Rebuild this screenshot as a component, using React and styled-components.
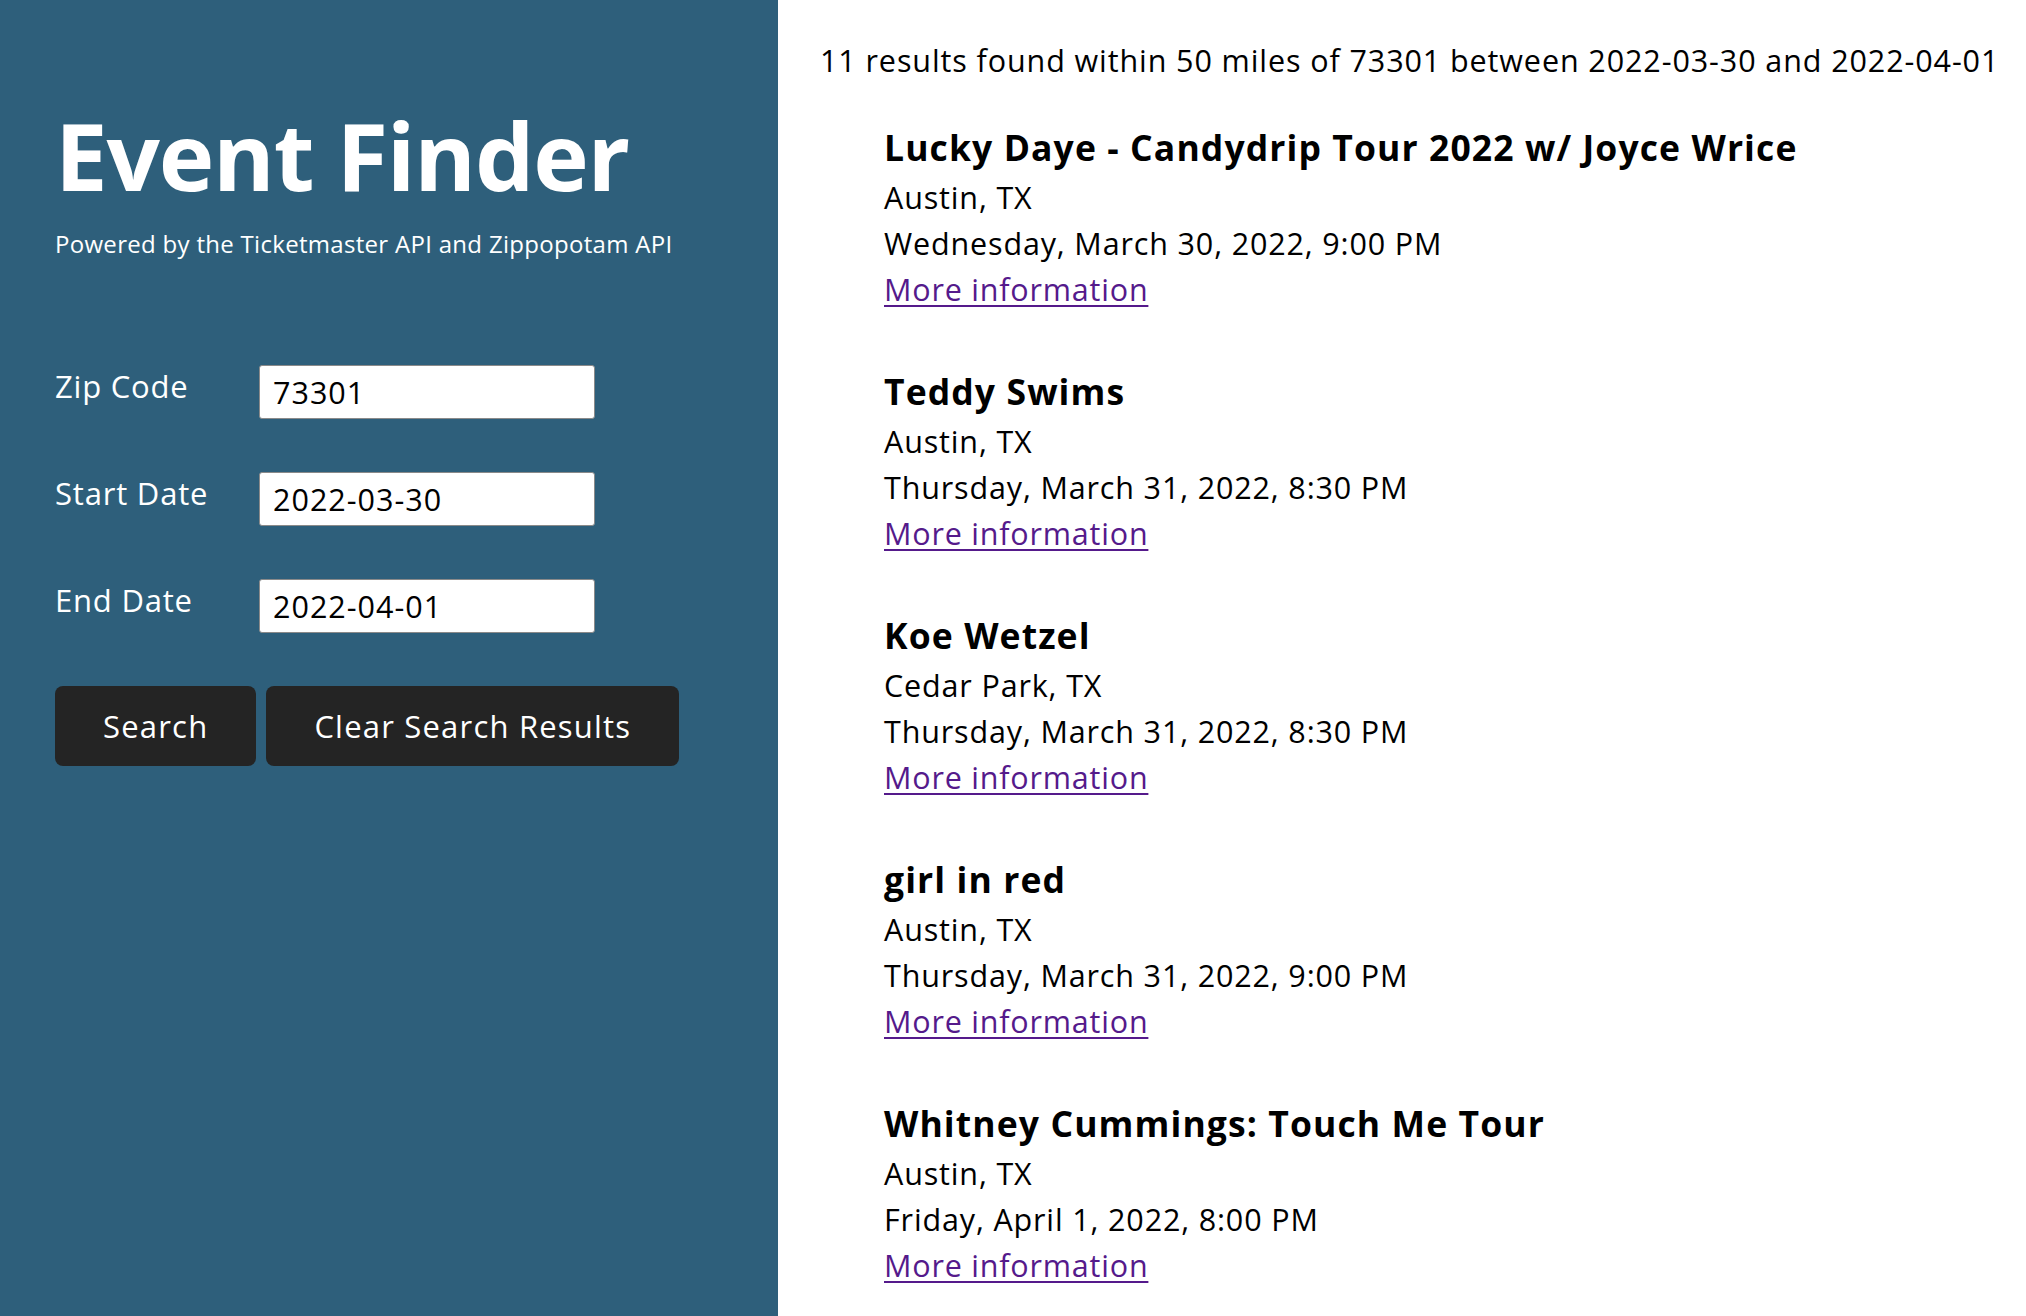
import React from 'react';
import styled, { createGlobalStyle } from 'styled-components';

const GlobalStyle = createGlobalStyle`
  html, body {
    margin: 0;
    padding: 0;
    background: #fff;
  }
  body {
    font-family: "Open Sans", "DejaVu Sans", sans-serif;
    color: #000;
  }
`

const Page = styled.div`
  display: flex;
  min-height: 100vh;
`
const Sidebar = styled.aside`
  flex: 0 0 778px;
  box-sizing: border-box;
  padding: 100px 0 0 55px;
  background: #2e5f7b;
  color: #fff;
`
const Title = styled.h1`
  margin: 0;
  font-size: 94px;
  line-height: 110px;
  font-weight: 700;
  letter-spacing: -1.2px;
`
const Subtitle = styled.p`
  margin: 19px 0 0 0;
  font-size: 24px;
  line-height: 30px;
  font-weight: 500;
  letter-spacing: 0.3px;
`
const Form = styled.form`
  display: flex;
  flex-direction: column;
  gap: 53px;
  margin-top: 106px;
`
const Row = styled.div`
  display: grid;
  grid-template-columns: 204px 336px;
  align-items: start;
`
const Label = styled.label`
  font-size: 31px;
  line-height: 42px;
  letter-spacing: 0.8px;
`
const Input = styled.input`
  box-sizing: border-box;
  width: 336px;
  height: 54px;
  padding: 0 13px;
  border: 1px solid #8a8a8a;
  border-radius: 3px;
  background: #fff;
  font-family: inherit;
  font-size: 30.5px;
  letter-spacing: 1px;
  color: #000;
  outline: none;
`
const Buttons = styled.div`
  display: flex;
  gap: 10px;
`
const Button = styled.button`
  height: 80px;
  padding: 0 48px;
  border: none;
  border-radius: 8px;
  background: #242424;
  color: #fff;
  font-family: inherit;
  font-size: 31px;
  letter-spacing: 1.2px;
  cursor: pointer;
`
const Results = styled.main`
  flex: 1;
  padding: 37px 0 0 42px;
  white-space: nowrap;
`
const Summary = styled.p`
  margin: 0;
  font-size: 30.5px;
  line-height: 46px;
  letter-spacing: 0.9px;
`
const EventList = styled.ul`
  list-style: none;
  margin: 37px 0 0 0;
  padding: 0 0 0 64px;
  display: flex;
  flex-direction: column;
  gap: 52px;
`
const EventItem = styled.li`
  display: flex;
  flex-direction: column;
`
const EventName = styled.h3`
  margin: 0;
  font-size: 35.5px;
  line-height: 54px;
  font-weight: 700;
  letter-spacing: 1.1px;
`
const Line = styled.span`
  font-size: 30.5px;
  line-height: 46px;
  letter-spacing: 0.85px;
`
const MoreLink = styled.a`
  align-self: flex-start;
  font-size: 30.5px;
  line-height: 46px;
  letter-spacing: 0.8px;
  color: #551a8b;
  text-decoration: underline;
  text-decoration-thickness: 2px;
  text-underline-offset: 4px;
`

const fields = [
  { id: 'zip', label: 'Zip Code', value: '73301' },
  { id: 'start', label: 'Start Date', value: '2022-03-30' },
  { id: 'end', label: 'End Date', value: '2022-04-01' },
];

const events = [
  { name: 'Lucky Daye - Candydrip Tour 2022 w/ Joyce Wrice', city: 'Austin, TX', date: 'Wednesday, March 30, 2022, 9:00 PM' },
  { name: 'Teddy Swims', city: 'Austin, TX', date: 'Thursday, March 31, 2022, 8:30 PM' },
  { name: 'Koe Wetzel', city: 'Cedar Park, TX', date: 'Thursday, March 31, 2022, 8:30 PM' },
  { name: 'girl in red', city: 'Austin, TX', date: 'Thursday, March 31, 2022, 9:00 PM' },
  { name: 'Whitney Cummings: Touch Me Tour', city: 'Austin, TX', date: 'Friday, April 1, 2022, 8:00 PM' },
];

const App = () => {
  return (
    <>
      <GlobalStyle />
      <Page>
        <Sidebar>
          <Title>Event Finder</Title>
          <Subtitle>Powered by the Ticketmaster API and Zippopotam API</Subtitle>
          <Form onSubmit={e => e.preventDefault()}>
            { fields.map(f => (
              <Row key={f.id}>
                <Label htmlFor={f.id}>{f.label}</Label>
                <Input id={f.id} defaultValue={f.value} />
              </Row>
            ))}
            <Buttons>
              <Button type="submit">Search</Button>
              <Button type="button">Clear Search Results</Button>
            </Buttons>
          </Form>
        </Sidebar>

        <Results>
          <Summary>11 results found within 50 miles of 73301 between 2022-03-30 and 2022-04-01</Summary>
          <EventList>
            { events.map(ev => (
              <EventItem key={ev.name}>
                <EventName>{ev.name}</EventName>
                <Line>{ev.city}</Line>
                <Line>{ev.date}</Line>
                <MoreLink href="#">More information</MoreLink>
              </EventItem>
            ))}
          </EventList>
        </Results>
      </Page>
    </>
  );
}

export default App;
